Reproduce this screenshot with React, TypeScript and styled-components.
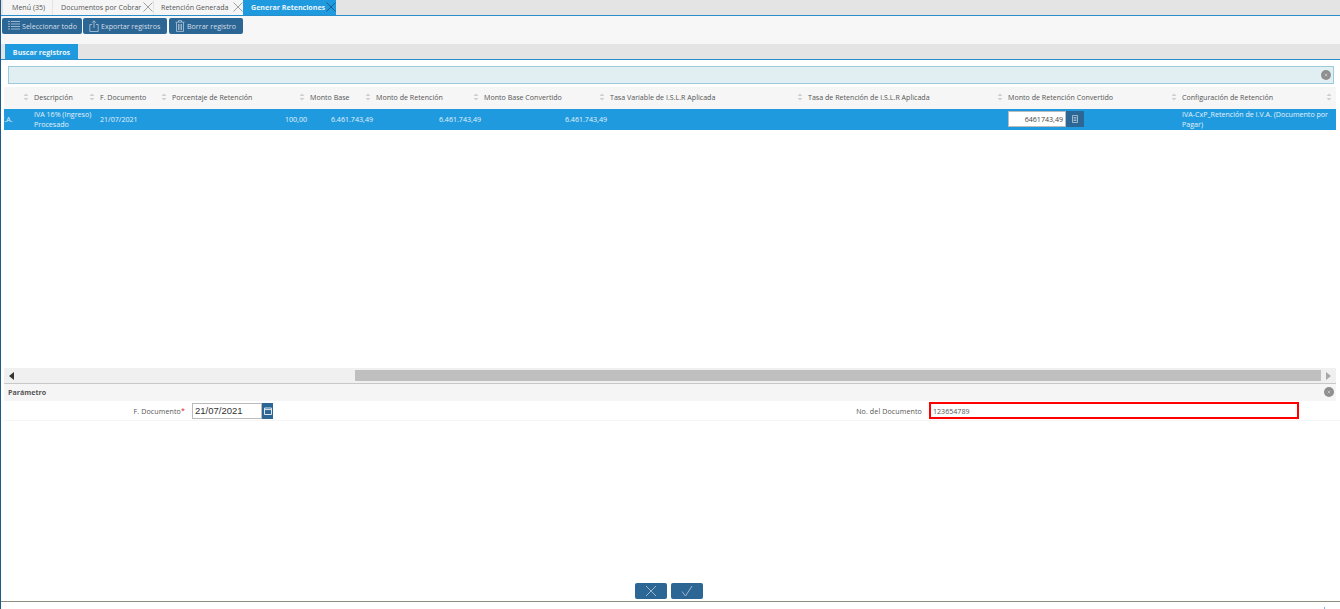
import React from "react";
import styled, { createGlobalStyle } from "styled-components";

const GlobalStyle = createGlobalStyle`
  html, body { margin: 0; padding: 0; height: 100%; overflow: hidden; background: #fff; }
  #root { height: 100%; }
  * { box-sizing: border-box; }
`;

const COLUMNS = "30px 66px 72px 138px 66px 108px 126px 198px 200px 174px 154px";

const headers = [
  "",
  "Descripción",
  "F. Documento",
  "Porcentaje de Retención",
  "Monto Base",
  "Monto de Retención",
  "Monto Base Convertido",
  "Tasa Variable de I.S.L.R Aplicada",
  "Tasa de Retención de I.S.L.R Aplicada",
  "Monto de Retención Convertido",
  "Configuración de Retención",
];

const SortIcon = () => (
  <StSort viewBox="0 0 6 8" width="6" height="8">
    <path d="M3 0.5 L5.5 3 H0.5 Z M0.5 5 H5.5 L3 7.5 Z" fill="#cfcfcf" />
  </StSort>
);

const CloseIcon = ({ dark }: { dark?: boolean }) => (
  <StCloseSvg viewBox="0 0 10 10" width="10" height="10">
    <path d="M0.5 0.5 L9.5 9.5 M9.5 0.5 L0.5 9.5" stroke={dark ? "#14507e" : "#8a8a8a"} strokeWidth="0.8" fill="none" />
  </StCloseSvg>
);

const CollapseIcon = () => (
  <StCollapse>
    <svg viewBox="0 0 6 6" width="4" height="4">
      <path d="M1 1 L5 5 M5 1 L1 5" stroke="#d8d8d8" strokeWidth="1" />
    </svg>
  </StCollapse>
);

const App = () => {
  return (
    <StPage>
      <GlobalStyle />
      <StTabBar>
        <StTab $width={49} $pad={9}>Menú (35)</StTab>
        <StTab $width={100} $pad={8}>
          Documentos por Cobrar <CloseIcon />
        </StTab>
        <StTab $width={89} $pad={7} $flush>
          Retención Generada <CloseIcon />
        </StTab>
        <StTab $width={93} $pad={8} $active>
          Generar Retenciones <CloseIcon dark />
        </StTab>
      </StTabBar>

      <StToolbar>
        <StToolButton $width={80}>
          <svg viewBox="0 0 12 11" width="12" height="11">
            <path d="M0 1.5H2M3 1.5H12M0 4H2M3 4H12M0 6.5H2M3 6.5H12M0 9H2M3 9H12" stroke="#b7c9da" strokeWidth="0.8" />
          </svg>
          Seleccionar todo
        </StToolButton>
        <StToolButton $width={84}>
          <svg viewBox="0 0 10 12" width="10" height="12">
            <path d="M3 4.5H0.8V11.5H9.2V4.5H7M5 8V0.8M3 2.8L5 0.8L7 2.8" stroke="#b7c9da" strokeWidth="0.8" fill="none" />
          </svg>
          Exportar registros
        </StToolButton>
        <StToolButton $width={74} $push={1}>
          <svg viewBox="0 0 10 12" width="10" height="12">
            <path d="M0.5 2.2H9.5M3.5 2V0.6H6.5V2M1.5 2.5V11.4H8.5V2.5M3.5 4V10M5 4V10M6.5 4V10" stroke="#b7c9da" strokeWidth="0.8" fill="none" />
          </svg>
          Borrar registro
        </StToolButton>
      </StToolbar>

      <StSubTabs>
        <StSubTab>Buscar registros</StSubTab>
      </StSubTabs>

      <StFilter>
        <CollapseIcon />
      </StFilter>

      <StGrid>
        <StHeadRow>
          {headers.map((label, i) => (
            <StHeadCell key={i}>
              {label && <SortIcon />}
              {label}
              {i === headers.length - 1 && (
                <StLastSort>
                  <SortIcon />
                </StLastSort>
              )}
            </StHeadCell>
          ))}
        </StHeadRow>
        <StDataRow>
          <StCell $clip>C.A.</StCell>
          <StCell>IVA 16% (Ingreso) Procesado</StCell>
          <StCell>21/07/2021</StCell>
          <StCell $right>100,00</StCell>
          <StCell $right>6.461.743,49</StCell>
          <StCell $right>6.461.743,49</StCell>
          <StCell $right>6.461.743,49</StCell>
          <StCell />
          <StCell />
          <StCell>
            <StAmountBox>
              <StAmountInput>6461743,49</StAmountInput>
              <StAmountButton>
                <svg viewBox="0 0 6 8" width="6" height="8">
                  <path d="M0.5 0.5H5.5V7.5H0.5ZM1.5 2.5H4.5M1.5 4H4.5M1.5 5.5H4.5" stroke="#b9cbdc" strokeWidth="0.8" fill="none" />
                </svg>
              </StAmountButton>
            </StAmountBox>
          </StCell>
          <StCell>IVA-CxP_Retención de I.V.A. (Documento por Pagar)</StCell>
        </StDataRow>
        <StGridBody />
        <StScrollBar>
          <StArrow $dir="left" />
          <StTrack>
            <StThumb />
          </StTrack>
          <StArrow $dir="right" />
        </StScrollBar>
      </StGrid>

      <StParamHeader>
        Parámetro
        <CollapseIcon />
      </StParamHeader>
      <StParamRow>
        <StParamLabel $width={181}>
          F. Documento<StRequired>*</StRequired>
        </StParamLabel>
        <StDateBox>
          <StDateValue>21/07/2021</StDateValue>
          <StDateButton>
            <svg viewBox="0 0 8 8" width="8" height="8">
              <path d="M0.5 1H7.5V7.5H0.5ZM0.5 2.6H7.5" stroke="#dbe6ef" strokeWidth="1" fill="none" />
            </svg>
          </StDateButton>
        </StDateBox>
        <StParamLabel $width={649}>No. del Documento</StParamLabel>
        <StDocInput>123654789</StDocInput>
      </StParamRow>

      <StSpacer />

      <StActions>
        <StActionButton>
          <svg viewBox="0 0 12 12" width="12" height="12">
            <path d="M1 1L11 11M11 1L1 11" stroke="#a9c0d5" strokeWidth="0.9" fill="none" />
          </svg>
        </StActionButton>
        <StActionButton>
          <svg viewBox="0 0 12 12" width="12" height="12">
            <path d="M1 6.5L4.5 11L11 1" stroke="#a9c0d5" strokeWidth="0.9" fill="none" />
          </svg>
        </StActionButton>
      </StActions>
      <StFooter>
        <StFooterMark />
      </StFooter>
    </StPage>
  );
};

export default App;

const StPage = styled.div`
  height: 100vh;
  display: flex;
  flex-direction: column;
  border-left: 1px solid #1d5a8c;
  font-family: "Open Sans", "Liberation Sans", sans-serif;
  font-size: 7.1px;
  color: #555;
  overflow: hidden;
`;

const StTabBar = styled.div`
  height: 16px;
  flex: none;
  display: flex;
  padding-left: 2px;
  background: #e4e4e4;
  border-bottom: 1px solid #2a8ecb;
`;

const StTab = styled.div<{ $width: number; $pad: number; $active?: boolean; $flush?: boolean }>`
  width: ${({ $width }) => $width}px;
  display: flex;
  align-items: center;
  justify-content: space-between;
  padding: 0 0 1px ${({ $pad }) => $pad}px;
  margin-right: ${({ $flush }) => ($flush ? 0 : 1)}px;
  background: ${({ $active }) => ($active ? "#209ade" : "#f5f5f5")};
  color: ${({ $active }) => ($active ? "#e8f4fb" : "#555")};
  font-weight: ${({ $active }) => ($active ? 700 : 400)};
  white-space: nowrap;
`;

const StCloseSvg = styled.svg`
  flex: none;
`;

const StToolbar = styled.div`
  height: 28px;
  flex: none;
  display: flex;
  gap: 1px;
  padding: 2px 0 0 1px;
  background: #f7f7f7;
`;

const StToolButton = styled.div<{ $width: number; $push?: number }>`
  width: ${({ $width }) => $width}px;
  height: 16px;
  display: flex;
  align-items: center;
  gap: 2px;
  margin-left: ${({ $push }) => $push ?? 0}px;
  padding: 0 0 1px 6px;
  border-radius: 2px;
  background: #2c6695;
  color: #d5dfe8;
  white-space: nowrap;
`;

const StSubTabs = styled.div`
  height: 16px;
  flex: none;
  padding-left: 4px;
  background: #e4e4e4;
  border-bottom: 1px solid #2a8ecb;
`;

const StSubTab = styled.div`
  width: 73px;
  height: 15px;
  display: flex;
  align-items: center;
  justify-content: center;
  background: #209ade;
  color: #e8f4fb;
  font-weight: 700;
`;

const StFilter = styled.div`
  height: 18px;
  flex: none;
  margin: 6px 6px 0 7px;
  display: flex;
  align-items: center;
  justify-content: flex-end;
  padding-right: 2px;
  background: #e1eff3;
  border: 1px solid #9ccbdb;
`;

const StCollapse = styled.span`
  width: 10px;
  height: 10px;
  display: flex;
  align-items: center;
  justify-content: center;
  border-radius: 50%;
  background: #8f8f8f;
`;

const StGrid = styled.div`
  height: 296px;
  flex: none;
  margin: 3px 4px 0 3px;
  display: flex;
  flex-direction: column;
`;

const StHeadRow = styled.div`
  height: 22px;
  flex: none;
  display: grid;
  grid-template-columns: ${COLUMNS};
  padding-bottom: 2px;
  background: #f6f6f6;
`;

const StHeadCell = styled.div`
  display: flex;
  align-items: center;
  white-space: nowrap;
`;

const StSort = styled.svg`
  flex: none;
  margin: 0 5px 0 -11px;
`;

const StLastSort = styled.span`
  margin-left: auto;
  padding-right: 4px;
  display: flex;
  & svg {
    margin: 0;
  }
`;

const StDataRow = styled.div`
  height: 21px;
  flex: none;
  display: grid;
  grid-template-columns: ${COLUMNS};
  background: #209ade;
  color: #e3f1fa;
  line-height: 10px;
  overflow: hidden;
`;

const StCell = styled.div<{ $right?: boolean; $clip?: boolean }>`
  display: flex;
  align-items: center;
  min-width: 0;
  padding: 0 3px 1px 0;
  justify-content: ${({ $right }) => ($right ? "flex-end" : "flex-start")};
  margin-left: ${({ $clip }) => ($clip ? -4 : 0)}px;
  overflow: ${({ $clip }) => ($clip ? "hidden" : "visible")};
`;

const StAmountBox = styled.div`
  display: flex;
  height: 16px;
`;

const StAmountInput = styled.div`
  width: 58px;
  display: flex;
  align-items: center;
  justify-content: flex-end;
  padding-right: 2px;
  background: #fff;
  border: 1px solid #bbb;
  color: #444;
`;

const StAmountButton = styled.div`
  width: 18px;
  display: flex;
  align-items: center;
  justify-content: center;
  background: #2c6695;
`;

const StGridBody = styled.div`
  flex: 1;
  background: #fff;
`;

const StScrollBar = styled.div`
  height: 15px;
  flex: none;
  display: flex;
  align-items: center;
  background: #f0f0f0;
`;

const StArrow = styled.span<{ $dir: "left" | "right" }>`
  width: 15px;
  flex: none;
  display: flex;
  justify-content: center;
  &::before {
    content: "";
    border-style: solid;
    border-width: 4px 0 4px 5px;
    border-color: transparent transparent transparent #a8a8a8;
    ${({ $dir }) => $dir === "left" && "border-width: 4px 5px 4px 0; border-color: transparent #333 transparent transparent;"}
  }
`;

const StTrack = styled.div`
  flex: 1;
  height: 11px;
  display: flex;
  justify-content: flex-end;
`;

const StThumb = styled.div`
  width: 966px;
  background: #bfbfbf;
`;

const StParamHeader = styled.div`
  height: 18px;
  flex: none;
  margin: 0 4px 0 3px;
  display: flex;
  align-items: center;
  justify-content: space-between;
  padding: 0 2px 2px 4px;
  background: #f5f5f5;
  border-top: 1px solid #c8c8c8;
  font-weight: 700;
`;

const StParamRow = styled.div`
  height: 20px;
  flex: none;
  margin-left: 3px;
  display: flex;
  align-items: center;
  border-bottom: 1px solid #f5f5f5;
`;

const StParamLabel = styled.div<{ $width: number }>`
  width: ${({ $width }) => $width}px;
  text-align: right;
  white-space: nowrap;
  letter-spacing: 0.1px;
`;

const StRequired = styled.span`
  color: #e02020;
`;

const StDateBox = styled.div`
  margin-left: 7px;
  height: 16px;
  display: flex;
`;

const StDateValue = styled.div`
  width: 70px;
  display: flex;
  align-items: center;
  padding-left: 2px;
  border: 1px solid #bbb;
  font-family: "Liberation Sans", Arial, sans-serif;
  font-size: 9.5px;
  color: #333;
`;

const StDateButton = styled.div`
  width: 11px;
  display: flex;
  align-items: center;
  justify-content: center;
  background: #2c6695;
`;

const StDocInput = styled.div`
  margin-left: 7px;
  width: 370px;
  height: 17px;
  display: flex;
  align-items: center;
  padding-left: 2px;
  border: 2px solid #f00;
  color: #555;
`;

const StSpacer = styled.div`
  flex: 1;
`;

const StActions = styled.div`
  height: 16px;
  flex: none;
  display: flex;
  justify-content: center;
  gap: 4px;
  padding-right: 3px;
`;

const StActionButton = styled.div`
  width: 32px;
  height: 16px;
  display: flex;
  align-items: center;
  justify-content: center;
  border-radius: 2px;
  background: #2c6695;
`;

const StFooter = styled.div`
  height: 8px;
  flex: none;
  margin-top: 2px;
  display: flex;
  justify-content: flex-end;
  align-items: flex-end;
  padding-right: 15px;
  border-top: 1px solid #8f8f7c;
`;

const StFooterMark = styled.span`
  width: 1px;
  height: 2px;
  background: #7fb0f0;
`;
